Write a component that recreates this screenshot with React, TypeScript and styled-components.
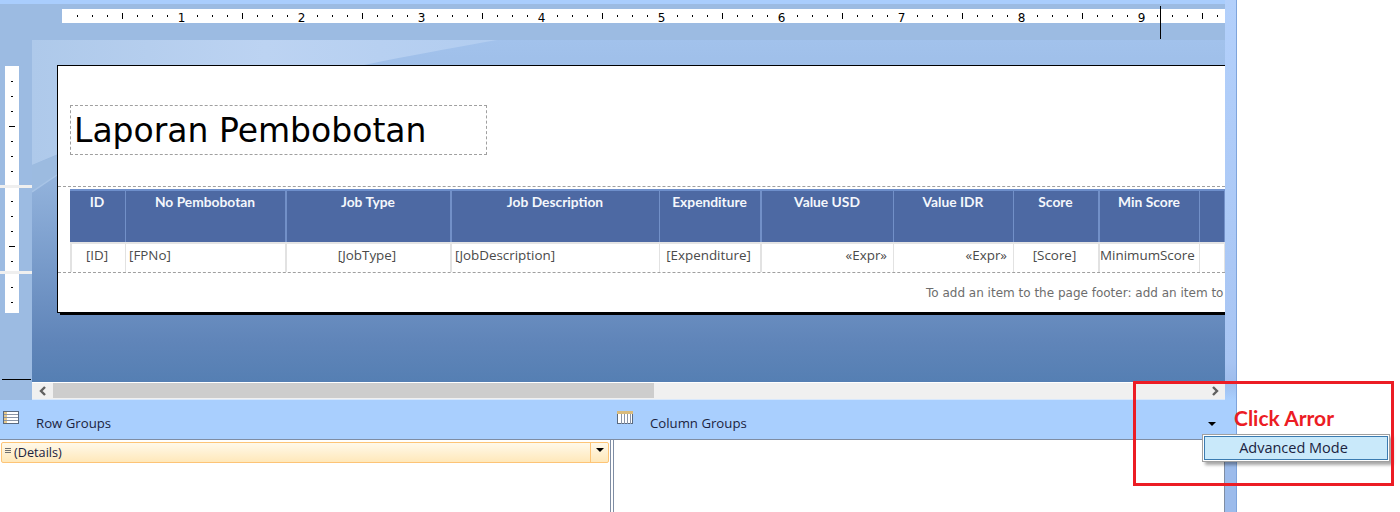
import React from "react";
import styled, { createGlobalStyle } from "styled-components";

const Global = createGlobalStyle`
  html, body { margin: 0; padding: 0; background: #fff; overflow: hidden; }
  #root { width: 1400px; height: 512px; }
`;

const Page = styled.div`
  position: relative;
  width: 1400px;
  height: 512px;
  display: flex;
  background: #fff;
  overflow: hidden;
  font-family: "Open Sans", "Liberation Sans", sans-serif;
`;

const Shell = styled.div`
  width: 1225px;
  display: flex;
  flex-direction: column;
`;

const Strip = styled.div`
  width: 11px;
  background: linear-gradient(
    180deg,
    #b3d0fb 0,
    #a8c5f3 360px,
    #9fbdec 382px,
    #a9cffe 400px,
    #a9cffe 439px,
    #9cbbeb 439px,
    #9cbbeb 512px
  );
  border-right: 1px solid #7ea4dc;
`;

const TopBand = styled.div`
  height: 4px;
  background: #a9cdfd;
`;

const Surface = styled.div`
  height: 378px;
  display: flex;
  background: #9cbbe2;
`;

const Gutter = styled.div`
  width: 32px;
  flex: none;
  display: flex;
  flex-direction: column;
`;

const Work = styled.div`
  flex: 1;
  min-width: 0;
  display: flex;
  flex-direction: column;
`;

const RulerRow = styled.div`
  height: 36px;
  padding: 5px 0 0 30px;
  box-sizing: border-box;
  flex: none;
`;

const Canvas = styled.div`
  position: relative;
  height: 342px;
  padding: 25px 0 0 25px;
  box-sizing: border-box;
  overflow: hidden;
  background: linear-gradient(180deg, #a2c2ec 0%, #93b3dc 40%, #83a5d2 55%, #6085b9 88%, #557fb3 100%);
`;

const Swoosh = styled.svg`
  position: absolute;
  left: 0;
  top: 0;
`;

const Sheet = styled.div`
  position: relative;
  height: 248px;
  background: #fff;
  border: solid #000;
  border-width: 1px 0 1px 1px;
  box-sizing: border-box;
  box-shadow: 3px 2px 0 #000;
`;

const TitleZone = styled.div`
  height: 121px;
  padding: 39px 0 0 12px;
  box-sizing: border-box;
  border-bottom: 1px dashed #a0a0a0;
`;

const TitleBox = styled.div`
  width: 417px;
  height: 50px;
  box-sizing: border-box;
  border: 1px dashed #a0a0a0;
  padding-left: 3px;
  font-family: "DejaVu Sans", Verdana, sans-serif;
  font-size: 33px;
  line-height: 50px;
  color: #000;
`;

const Table = styled.div`
  margin: 2px 0 0 12px;
  width: 1155px;
  overflow: hidden;
`;

const tpl = "56px 161px 165px 208px 102px 132px 120px 86px 100px 25px";

const HeadRow = styled.div`
  display: grid;
  grid-template-columns: ${tpl};
  height: 53px;
  background: #4d69a3;
  border-top: 2px solid #6e8fcb;
  box-sizing: border-box;
`;

const HeadCell = styled.div<{ $thick?: boolean }>`
  border-right: ${(p) => (p.$thick ? "2px" : "1px")} solid #7290c8;
  font-family: Lato, "Liberation Sans", sans-serif;
  font-weight: 700;
  font-size: 13.8px;
  line-height: 17px;
  padding: 2px 1px 0 0;
  text-align: center;
  color: #f4f7fc;
  white-space: nowrap;
  box-sizing: border-box;
`;

const BodyRow = styled.div`
  display: grid;
  grid-template-columns: ${tpl};
  height: 30px;
  border-top: 2px solid #e4e4e4;
  box-sizing: border-box;
`;

const BodyCell = styled.div<{ $align?: string; $thick?: boolean; $flush?: boolean }>`
  border-right: ${(p) => (p.$thick ? "2px" : "1px")} solid #e2e2e2;
  font-size: 13.4px;
  line-height: 23px;
  padding: ${(p) => (p.$flush ? "0" : "0 6px 0 3px")};
  color: #4a4a4a;
  white-space: nowrap;
  text-align: ${(p) => p.$align || "center"};
  box-sizing: border-box;
  &:first-child { border-left: 2px solid #e2e2e2; }
`;

const SectionRule = styled.div`
  border-top: 1px dashed #a0a0a0;
`;

const Footer = styled.div`
  height: 38px;
  font-family: "DejaVu Sans", Tahoma, sans-serif;
  font-size: 12px;
  line-height: 40px;
  color: #6d6d6d;
  white-space: nowrap;
  padding-left: 868px;
`;

const ScrollWrap = styled.div`
  display: flex;
  height: 18px;
  background: #9cbbe2;
`;

const ScrollLead = styled.div`
  width: 32px;
  flex: none;
`;

const ScrollBar = styled.div`
  flex: 1;
  height: 18px;
  display: flex;
  align-items: flex-start;
  background: #f0f0f0;
  border-top: 1px solid #fff;
  border-bottom: 1px solid #d8e8fc;
  box-sizing: border-box;
`;

const ScrollBtn = styled.div`
  width: 21px;
  height: 16px;
  flex: none;
  display: flex;
  align-items: center;
  justify-content: center;
`;

const Thumb = styled.div`
  width: 601px;
  height: 15px;
  background: #cdcdcd;
`;

const ScrollSpace = styled.div`
  flex: 1;
`;

const Groups = styled.div`
  height: 112px;
  display: flex;
  flex-direction: column;
  background: #fff;
`;

const GroupHead = styled.div`
  height: 39px;
  flex: none;
  display: flex;
  background: #a9cffe;
  border-bottom: 1px solid #7f8da3;
  box-sizing: content-box;
`;

const HeadSide = styled.div<{ $w: number }>`
  width: ${(p) => p.$w}px;
  flex: none;
  display: flex;
  padding: 11px 0 0 3px;
  box-sizing: border-box;
`;

const GroupLabel = styled.span<{ $gap: number }>`
  margin-left: ${(p) => p.$gap}px;
  padding-top: 3px;
  font-size: 13.2px;
  line-height: 18px;
  color: #1b2340;
`;

const PanesRow = styled.div`
  flex: 1;
  display: flex;
  gap: 2px;
  background: #fff;
`;

const LeftPane = styled.div`
  width: 611px;
  flex: none;
  box-sizing: border-box;
  padding: 2px 1px 0 1px;
  border-right: 1px solid #7f8da3;
`;

const RightPane = styled.div`
  flex: 1;
  border-left: 1px solid #7f8da3;
  border-right: 1px solid #7f8da3;
`;

const DetailsRow = styled.div`
  height: 21px;
  display: flex;
  box-sizing: border-box;
  border: 1px solid #fdc476;
  border-radius: 2px;
  background: linear-gradient(180deg, #fff9ea 0%, #ffe8ba 100%);
  font-size: 12.7px;
  color: #1b2340;
`;

const DetailsName = styled.div`
  flex: 1;
  display: flex;
  align-items: flex-start;
  padding-left: 3px;
  line-height: 19px;
  gap: 2px;
`;

const DetailsArrow = styled.div`
  width: 18px;
  flex: none;
  display: flex;
  justify-content: center;
  padding-top: 5px;
  box-sizing: border-box;
  border-left: 1px solid #fdc476;
`;

const Tri = styled.div`
  width: 0;
  height: 0;
  border-left: 4px solid transparent;
  border-right: 4px solid transparent;
  border-top: 4px solid #000;
`;

const HeadArrow = styled(Tri)`
  position: absolute;
  left: 1208px;
  top: 422px;
`;

const Menu = styled.div`
  position: absolute;
  left: 1202px;
  top: 434px;
  width: 188px;
  height: 28px;
  box-sizing: border-box;
  background: #fff;
  border: 1px solid #a0a0a0;
  padding: 1px;
  box-shadow: 3px 3px 3px rgba(0, 0, 0, 0.35);
`;

const MenuItem = styled.div`
  height: 24px;
  box-sizing: border-box;
  border: 1px solid #3a7bb0;
  background: #c9e9fa;
  text-align: center;
  font-size: 14.5px;
  line-height: 21px;
  color: #1b2340;
  padding-right: 5px;
`;

const Callout = styled.div`
  position: absolute;
  left: 1133px;
  top: 381px;
  width: 261px;
  height: 105px;
  box-sizing: border-box;
  border: 3px solid #ec1c24;
  pointer-events: none;
`;

const CalloutText = styled.div`
  position: absolute;
  left: 1234px;
  top: 405px;
  font-family: Lato, "Liberation Sans", sans-serif;
  font-weight: 700;
  font-size: 21px;
  line-height: 26px;
  color: #ec1c24;
`;

const HRuler = () => {
  const ticks: React.ReactNode[] = [];
  for (let i = 1; i <= 77; i++) {
    const x = i * 15;
    if (i % 8 === 0) {
      ticks.push(
        <text key={i} x={x - 0.5} y={13} fontSize="12" textAnchor="middle" fontFamily="'DejaVu Sans', sans-serif" fill="#000">
          {i / 8}
        </text>
      );
    } else if (i % 4 === 0) {
      ticks.push(<rect key={i} x={x} y={4} width={1} height={6} fill="#000" />);
    } else {
      ticks.push(<rect key={i} x={x} y={6} width={1} height={2} fill="#000" />);
    }
  }
  return (
    <svg width="1163" height="14" style={{ display: "block", background: "#fff", overflow: "visible" }}>
      {ticks}
      <rect x={1098} y={-3} width={1} height={33} fill="#000" />
    </svg>
  );
};

const VTicks = [81, 96, 111, 141, 156, 171, 201, 216, 231, 261, 287, 302];
const VRuler = () => (
  <svg width="32" height="378" style={{ display: "block" }}>
    <rect x={5} y={62} width={14} height={247} fill="#fff" />
    {VTicks.map((y) => (
      <rect key={y} x={11} y={y - 4} width={2} height={1} fill="#000" />
    ))}
    {[126, 246].map((y) => (
      <rect key={y} x={9} y={y - 4} width={6} height={1} fill="#000" />
    ))}
    <rect x={0} y={181} width={32} height={3} fill="#efefef" />
    <rect x={0} y={267} width={32} height={3} fill="#efefef" />
    <rect x={2} y={375} width={29} height={1} fill="#000" />
  </svg>
);

const RowIcon = () => (
  <svg width="17" height="14" viewBox="0 0 17 14" style={{ display: "block" }}>
    <rect x="0.5" y="0.5" width="15" height="12" fill="#fff" stroke="#5a6a80" />
    <rect x="1" y="1" width="3" height="11" fill="#e6c88a" />
    <path d="M1 3.5H15M1 6.5H15M1 9.5H15" stroke="#8a95a8" />
  </svg>
);

const ColIcon = () => (
  <svg width="17" height="14" viewBox="0 0 17 14" style={{ display: "block" }}>
    <rect x="0.5" y="0.5" width="15" height="12" fill="#fff" stroke="#5a6a80" />
    <rect x="0" y="0" width="16" height="3" fill="#d9bb7c" />
    <path d="M4.5 3V13M7.5 3V13M10.5 3V13M13.5 3V13" stroke="#8a95a8" />
  </svg>
);

const Lines = () => (
  <svg width="7" height="8" viewBox="0 0 7 8" style={{ marginTop: 4, flex: "none" }}>
    <path d="M0 1.5H6M0 3.5H6M0 5.5H6" stroke="#707070" />
  </svg>
);

const Chevron = ({ d }: { d: string }) => (
  <svg width="8" height="10" viewBox="0 0 8 10">
    <path d={d} fill="none" stroke="#606060" strokeWidth="2.4" />
  </svg>
);

const thick = [1, 2, 4, 7];
const heads = ["ID", "No Pembobotan", "Job Type", "Job Description", "Expenditure", "Value USD", "Value IDR", "Score", "Min Score", ""];
const cells: { t: string; a?: string; flush?: boolean }[] = [
  { t: "[ID]" },
  { t: "[FPNo]", a: "left" },
  { t: "[JobType]" },
  { t: "[JobDescription]", a: "left" },
  { t: "[Expenditure]" },
  { t: "«Expr»", a: "right" },
  { t: "«Expr»", a: "right" },
  { t: "[Score]" },
  { t: "MinimumScore", a: "left", flush: true },
  { t: "" },
];

export default function App() {
  return (
    <Page>
      <Global />
      <Shell>
        <TopBand />
        <Surface>
          <Gutter>
            <VRuler />
          </Gutter>
          <Work>
            <RulerRow>
              <HRuler />
            </RulerRow>
            <Canvas>
              <Swoosh width="1193" height="342" viewBox="0 0 1193 342">
                <defs>
                  <linearGradient id="sw" x1="0" y1="0" x2="1" y2="0">
                    <stop offset="0" stopColor="#aec9ea" />
                    <stop offset="0.5" stopColor="#bcd3f2" />
                    <stop offset="1" stopColor="#b2cdf0" />
                  </linearGradient>
                </defs>
                <path d="M0 125L25 115V135L0 152Z" fill="#9cbbe0" />
                <path d="M0 0H465C340 22 160 55 0 125Z" fill="url(#sw)" />
                <path d="M0 152L25 135" stroke="#a8c4e6" strokeWidth="1.5" fill="none" />
              </Swoosh>
              <Sheet>
                <TitleZone>
                  <TitleBox>Laporan Pembobotan</TitleBox>
                </TitleZone>
                <Table>
                  <HeadRow>
                    {heads.map((h, i) => (
                      <HeadCell key={i} $thick={thick.includes(i)}>
                        {h}
                      </HeadCell>
                    ))}
                  </HeadRow>
                  <BodyRow>
                    {cells.map((c, i) => (
                      <BodyCell key={i} $align={c.a} $flush={c.flush} $thick={thick.includes(i)}>
                        {c.t}
                      </BodyCell>
                    ))}
                  </BodyRow>
                </Table>
                <SectionRule />
                <Footer>To add an item to the page footer: add an item to</Footer>
              </Sheet>
            </Canvas>
          </Work>
        </Surface>
        <ScrollWrap>
          <ScrollLead />
          <ScrollBar>
            <ScrollBtn>
              <Chevron d="M6 1L2 5L6 9" />
            </ScrollBtn>
            <Thumb />
            <ScrollSpace />
            <ScrollBtn>
              <Chevron d="M2 1L6 5L2 9" />
            </ScrollBtn>
          </ScrollBar>
        </ScrollWrap>
        <Groups>
          <GroupHead>
            <HeadSide $w={614}>
              <RowIcon />
              <GroupLabel $gap={16}>Row Groups</GroupLabel>
            </HeadSide>
            <HeadSide $w={400}>
              <ColIcon />
              <GroupLabel $gap={16}>Column Groups</GroupLabel>
            </HeadSide>
          </GroupHead>
          <PanesRow>
            <LeftPane>
              <DetailsRow>
                <DetailsName>
                  <Lines />
                  (Details)
                </DetailsName>
                <DetailsArrow>
                  <Tri />
                </DetailsArrow>
              </DetailsRow>
            </LeftPane>
            <RightPane />
          </PanesRow>
        </Groups>
      </Shell>
      <Strip />
      <HeadArrow />
      <Menu>
        <MenuItem>Advanced Mode</MenuItem>
      </Menu>
      <CalloutText>Click Arror</CalloutText>
      <Callout />
    </Page>
  );
}
